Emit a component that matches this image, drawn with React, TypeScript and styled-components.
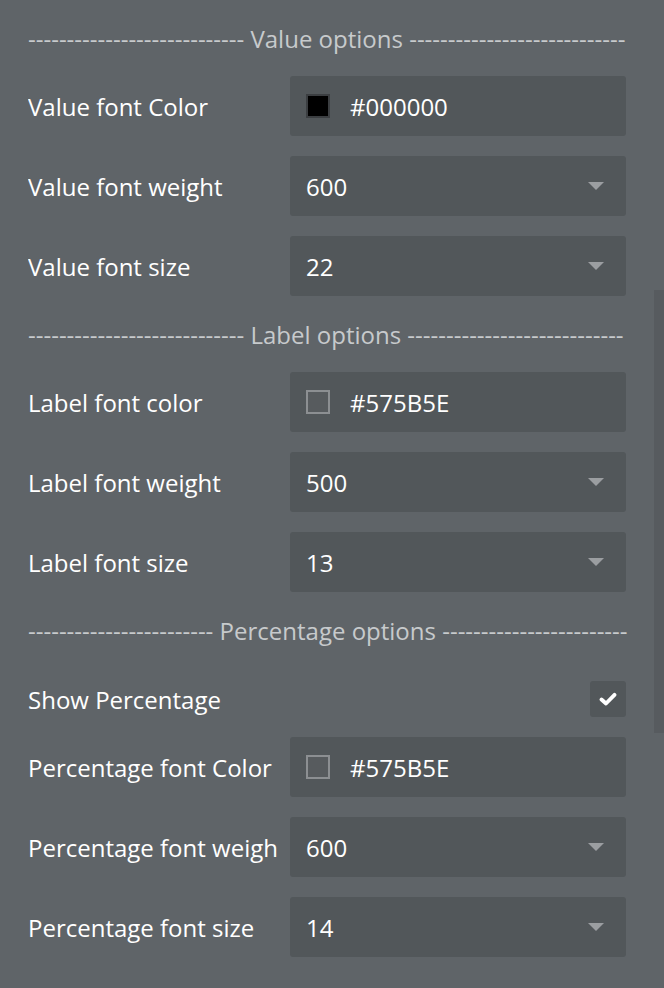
import React from "react";
import styled, { createGlobalStyle } from "styled-components";

const Global = createGlobalStyle`
  html, body { margin: 0; padding: 0; background: #5f6468; }
  body { font-family: "Open Sans", "Noto Sans", sans-serif; }
`;

const Page = styled.div`
  position: relative;
  width: 664px;
  height: 988px;
  overflow: hidden;
  background: #5f6468;
  box-sizing: border-box;
  padding: 20px 38px 0 28px;
  display: flex;
  flex-direction: column;
`;

const Scrollbar = styled.div`
  position: absolute;
  right: 0;
  top: 290px;
  width: 10px;
  height: 443px;
  background: #575b5f;
`;

const Divider = styled.div<{ $top?: number }>`
  display: flex;
  align-items: center;
  height: 36px;
  margin: ${(p) => p.$top ?? 20}px 0 20px;
  color: #c7cacc;
  font-size: 24px;
  white-space: nowrap;
`;

const Row = styled.div<{ $h?: number; $mb?: number; $mt?: number }>`
  display: flex;
  align-items: center;
  height: ${(p) => p.$h ?? 60}px;
  margin-top: ${(p) => p.$mt ?? 0}px;
  margin-bottom: ${(p) => p.$mb ?? 20}px;
`;

const Label = styled.div`
  width: 256px;
  margin-right: 6px;
  overflow: hidden;
  white-space: nowrap;
  color: #ffffff;
  font-size: 24px;
`;

const Field = styled.div`
  flex: 1;
  height: 60px;
  box-sizing: border-box;
  background: #52575a;
  border-radius: 3px;
  display: flex;
  align-items: center;
  padding: 0 22px 0 16px;
  color: #ffffff;
  font-size: 24px;
`;

const Value = styled.span`
  flex: 1;
`;

const Swatch = styled.span<{ $fill: string; $border: string }>`
  width: 24px;
  height: 24px;
  box-sizing: border-box;
  background: ${(p) => p.$fill};
  border: 2px solid ${(p) => p.$border};
  margin-right: 20px;
  flex: none;
`;

const Caret = styled.span`
  width: 0;
  height: 0;
  border-left: 8px solid transparent;
  border-right: 8px solid transparent;
  border-top: 8px solid #9b9ea1;
`;

const Spacer = styled.div`
  flex: 1;
`;

const CheckBox = styled.div`
  width: 36px;
  height: 36px;
  border-radius: 3px;
  background: #52575a;
  display: flex;
  align-items: center;
  justify-content: center;
`;

const Section = ({ title, dashes, top }: { title: string; dashes: number; top?: number }) => {
  const d = "-".repeat(dashes);
  return <Divider $top={top}>{`${d} ${title} ${d}`}</Divider>;
};

const ColorRow = ({ label, hex, fill, border }: { label: string; hex: string; fill: string; border: string }) => (
  <Row>
    <Label>{label}</Label>
    <Field>
      <Swatch $fill={fill} $border={border} />
      <Value>{hex}</Value>
    </Field>
  </Row>
);

const SelectRow = ({ label, value, last }: { label: string; value: string; last?: boolean }) => (
  <Row $mb={last ? 0 : 20}>
    <Label>{label}</Label>
    <Field>
      <Value>{value}</Value>
      <Caret />
    </Field>
  </Row>
);

export default function App() {
  return (
    <>
      <Global />
      <Page>
        <Section title="Value options" dashes={28} top={0} />
        <ColorRow label="Value font Color" hex="#000000" fill="#000000" border="#3b3e41" />
        <SelectRow label="Value font weight" value="600" />
        <SelectRow label="Value font size" value="22" last />
        <Section title="Label options" dashes={28} />
        <ColorRow label="Label font color" hex="#575B5E" fill="#575b5e" border="#8c8f92" />
        <SelectRow label="Label font weight" value="500" />
        <SelectRow label="Label font size" value="13" last />
        <Section title="Percentage options" dashes={24} />
        <Row $h={36} $mt={13}>
          <Label>Show Percentage</Label>
          <Spacer />
          <CheckBox>
            <svg width="18" height="14" viewBox="0 0 18 14">
              <path d="M2.5 7.5 L7 11.5 L15.5 2.8" fill="none" stroke="#fff" strokeWidth="3.8" strokeLinecap="round" strokeLinejoin="round" />
            </svg>
          </CheckBox>
        </Row>
        <ColorRow label="Percentage font Color" hex="#575B5E" fill="#575b5e" border="#8c8f92" />
        <SelectRow label="Percentage font weigh" value="600" />
        <SelectRow label="Percentage font size" value="14" last />
        <Scrollbar />
      </Page>
    </>
  );
}
